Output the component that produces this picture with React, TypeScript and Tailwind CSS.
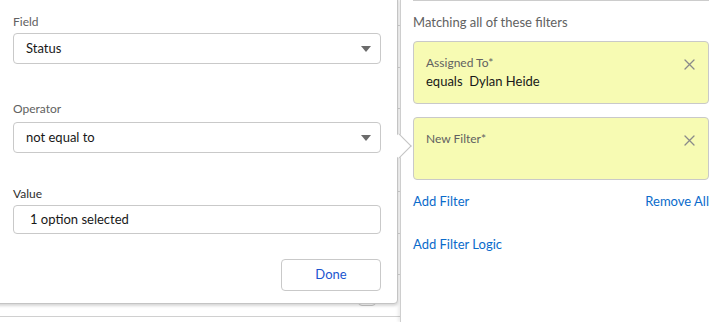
import React from "react";

function Caret() {
  return (
    <svg width="10" height="6" viewBox="0 0 10 6" className="shrink-0">
      <polygon points="0,0 10,0 5,6" fill="#6b6b6b" />
    </svg>
  );
}

function CloseIcon() {
  return (
    <svg width="11" height="11" viewBox="0 0 11 11" className="shrink-0">
      <path d="M1 1 L10 10 M10 1 L1 10" stroke="#8a8a8a" strokeWidth="1.3" strokeLinecap="round" />
    </svg>
  );
}

function FilterCard({ title, value }: { title: string; value?: string }) {
  return (
    <div className="h-[63px] rounded-[4px] border border-[#c9c9c9] bg-[#f7fbb3] pl-[12px] pr-[13px] flex justify-between">
      <div className="pt-[13px]">
        <div className="text-[12px] leading-[16px] text-[#616161]">{title}</div>
        {value && (
          <div className="mt-[1px] text-[13px] leading-[18px] text-[#181818] whitespace-pre">{value}</div>
        )}
      </div>
      <div className="pt-[17px]">
        <CloseIcon />
      </div>
    </div>
  );
}

export default function App() {
  const rowHeights = [42, 41, 42, 41, 42, 41];
  return (
    <div
      className="relative w-[721px] h-[322px] overflow-hidden bg-white"
      style={{ fontFamily: "Lato, 'Open Sans', sans-serif" }}
    >
      <div className="flex h-full">
        {/* background table rows */}
        <div className="w-[400px] flex flex-col">
          <div className="h-[26px] border-b border-[#d6d6d6]" />
          {rowHeights.map((h, i) => (
            <div
              key={i}
              className={i % 2 === 0 ? "h-[42px] border-b border-[#d6d6d6]" : "h-[41px] border-b border-[#d6d6d6]"}
            />
          ))}
          <div className="h-[42px] border-b border-[#d0d0d0] flex">
            <div className="ml-[358px] mt-[10px] w-[18px] h-[21px] rounded-[4px] border border-[#c9c9c9]" />
          </div>
        </div>

        {/* right panel */}
        <div className="w-[321px] border-l border-[#cfcfcf] shadow-[-2px_0_3px_rgba(0,0,0,0.08)] pl-[12px] pr-[12px] flex flex-col">
          <div className="h-[1px] bg-[#cccccc]" />
          <div className="mt-[12px] text-[13px] leading-[18px] text-[#616161]">Matching all of these filters</div>
          <div className="mt-[10px]">
            <FilterCard title="Assigned To*" value={"equals  Dylan Heide"} />
          </div>
          <div className="mt-[13px]">
            <FilterCard title="New Filter*" />
          </div>
          <div className="mt-[11px] flex justify-between text-[13px] leading-[20px] text-[#0a6bcb]">
            <span>Add Filter</span>
            <span>Remove All</span>
          </div>
          <div className="mt-[23px] text-[13px] leading-[20px] text-[#0a6bcb]">Add Filter Logic</div>
        </div>
      </div>

      {/* popover */}
      <div className="absolute left-[-10px] top-[-10px] w-[408px] h-[314px] bg-white border border-[#c4c4c4] rounded-[4px] shadow-[0_2px_3px_rgba(0,0,0,0.16)] pl-[22px] pr-[16px] pt-[22px]">
        <div className="text-[12px] leading-[18px] text-[#616161]">Field</div>
        <div className="mt-[2px] h-[31px] rounded-[4px] border border-[#c9c9c9] pl-[12px] pr-[9px] flex items-center justify-between">
          <span className="text-[13px] text-[#181818]">Status</span>
          <Caret />
        </div>

        <div className="mt-[36px] text-[12px] leading-[18px] text-[#616161]">Operator</div>
        <div className="mt-[4px] h-[31px] rounded-[4px] border border-[#c9c9c9] pl-[12px] pr-[9px] flex items-center justify-between">
          <span className="text-[13px] text-[#181818]">not equal to</span>
          <Caret />
        </div>

        <div className="mt-[32px] text-[12px] leading-[18px] text-[#2e2e2e]">Value</div>
        <div className="mt-[2px] h-[29px] rounded-[4px] border border-[#c9c9c9] pl-[16px] flex items-center">
          <span className="text-[13px] text-[#181818]">1 option selected</span>
        </div>

        <div className="mt-[25px] flex justify-end">
          <div className="w-[100px] h-[32px] rounded-[4px] border border-[#c9c9c9] flex items-center justify-center text-[13px] text-[#1b55cf]">
            Done
          </div>
        </div>

        {/* arrow */}
        <div className="absolute right-[-11px] top-[146px] w-[18px] h-[18px] rotate-45 bg-white border-t border-r border-[#c4c4c4]" />
      </div>
    </div>
  );
}
